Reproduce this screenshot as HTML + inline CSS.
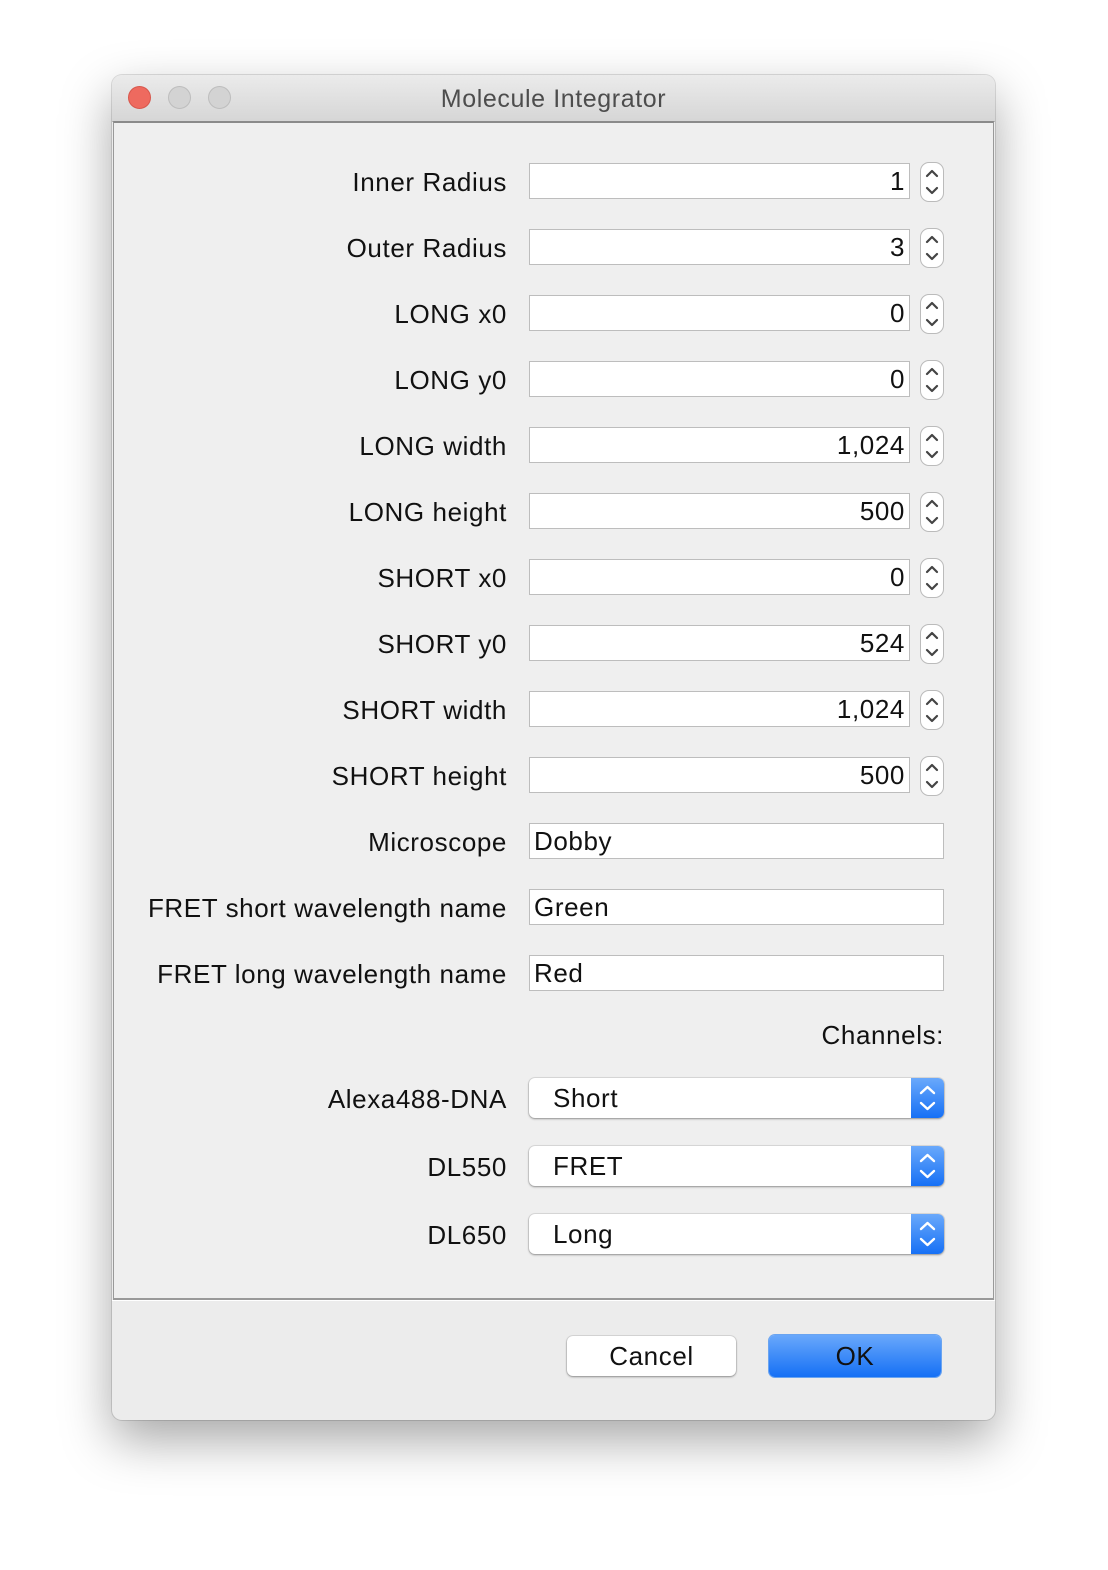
<!DOCTYPE html>
<html><head><style>
body{margin:0;width:1108px;height:1570px;background:#fff;font-family:"Liberation Sans","DejaVu Sans",sans-serif;position:relative;overflow:hidden;letter-spacing:0.6px}
.win{position:absolute;left:112px;top:75px;width:883px;height:1345px;background:#ececec;border-radius:10px;box-shadow:0 20px 50px rgba(0,0,0,0.35),0 0 0 1px rgba(0,0,0,0.12);overflow:hidden}
.title{position:absolute;left:0;top:0;width:100%;height:46px;background:linear-gradient(#ebebeb,#d6d6d6);border-bottom:1px solid #b4b4b4;text-align:center;line-height:48px;font-size:25px;color:#4d4d4d}
.dot{position:absolute;top:11px;width:23px;height:23px;border-radius:50%;box-sizing:border-box}
.panel{position:absolute;left:1px;top:46px;width:879px;height:1175px;background:#efefef;border:1px solid #999;border-top:2px solid #8a8a8a;border-bottom:2px solid #999}
.a{position:absolute;font-size:26px;color:#111;white-space:nowrap}
.lab{right:601px;text-align:right}
.tf{position:absolute;left:529px;height:36px;background:#fff;border:1px solid #bdbdbd;box-sizing:border-box;font-size:26px;line-height:34px;padding:0 4px;color:#111}
.num{width:381px;text-align:right}
.wide{width:415px}
.sp{position:absolute;left:920px;width:24px;height:40px;border:1px solid #bbb;border-radius:9px;background:#fff;box-sizing:border-box}
.sp svg{position:absolute;left:0;top:-1px}
.cb{position:absolute;left:529px;width:415px;height:40px;background:#fff;border-radius:6px;box-shadow:0 1px 2px rgba(0,0,0,0.35),0 0 0 1px rgba(0,0,0,0.08);font-size:26px;line-height:40px;color:#111;overflow:hidden}
.cb span{position:absolute;left:24px;top:0}
.cb i{position:absolute;right:0;top:0;width:33px;height:40px;background:linear-gradient(#6aa9fb,#1670f5)}
.cb i svg{display:block}
</style></head><body>
<div class="win">
<div class="title">Molecule Integrator
<div class="dot" style="left:16px;background:#ee6a5f;border:1px solid #d7574c"></div>
<div class="dot" style="left:56px;background:#d3d3d3;border:1px solid #bdbdbd"></div>
<div class="dot" style="left:96px;background:#d3d3d3;border:1px solid #bdbdbd"></div>
</div>
<div class="panel"></div>
<div style="position:absolute;left:0;top:1225px;width:100%;height:1px;background:#fff"></div>
</div>

<div class="a lab" style="top:167px">Inner Radius</div><div class="tf num" style="top:163px">1</div>
<div class="a lab" style="top:233px">Outer Radius</div><div class="tf num" style="top:229px">3</div>
<div class="a lab" style="top:299px">LONG x0</div><div class="tf num" style="top:295px">0</div>
<div class="a lab" style="top:365px">LONG y0</div><div class="tf num" style="top:361px">0</div>
<div class="a lab" style="top:431px">LONG width</div><div class="tf num" style="top:427px">1,024</div>
<div class="a lab" style="top:497px">LONG height</div><div class="tf num" style="top:493px">500</div>
<div class="a lab" style="top:563px">SHORT x0</div><div class="tf num" style="top:559px">0</div>
<div class="a lab" style="top:629px">SHORT y0</div><div class="tf num" style="top:625px">524</div>
<div class="a lab" style="top:695px">SHORT width</div><div class="tf num" style="top:691px">1,024</div>
<div class="a lab" style="top:761px">SHORT height</div><div class="tf num" style="top:757px">500</div>
<div class="a lab" style="top:827px">Microscope</div><div class="tf wide" style="top:823px">Dobby</div>
<div class="a lab" style="top:893px">FRET short wavelength name</div><div class="tf wide" style="top:889px">Green</div>
<div class="a lab" style="top:959px">FRET long wavelength name</div><div class="tf wide" style="top:955px">Red</div>
<div class="a" style="top:1020px;right:164px">Channels:</div>

<svg width="0" height="0" style="position:absolute"><defs><g id="ar"><path d="M7 14 L12 9 L17 14 M7 26 L12 31 L17 26" fill="none" stroke="#444" stroke-width="2.2" stroke-linecap="round" stroke-linejoin="round"/></g></defs></svg>
<div class="sp" style="top:162px"><svg width="24" height="40"><use href="#ar" x="-1"/></svg></div>
<div class="sp" style="top:228px"><svg width="24" height="40"><use href="#ar" x="-1"/></svg></div>
<div class="sp" style="top:294px"><svg width="24" height="40"><use href="#ar" x="-1"/></svg></div>
<div class="sp" style="top:360px"><svg width="24" height="40"><use href="#ar" x="-1"/></svg></div>
<div class="sp" style="top:426px"><svg width="24" height="40"><use href="#ar" x="-1"/></svg></div>
<div class="sp" style="top:492px"><svg width="24" height="40"><use href="#ar" x="-1"/></svg></div>
<div class="sp" style="top:558px"><svg width="24" height="40"><use href="#ar" x="-1"/></svg></div>
<div class="sp" style="top:624px"><svg width="24" height="40"><use href="#ar" x="-1"/></svg></div>
<div class="sp" style="top:690px"><svg width="24" height="40"><use href="#ar" x="-1"/></svg></div>
<div class="sp" style="top:756px"><svg width="24" height="40"><use href="#ar" x="-1"/></svg></div>

<div class="a lab" style="top:1084px">Alexa488-DNA</div>
<div class="cb" style="top:1078px"><span>Short</span><i><svg width="33" height="40"><path d="M10 15 L16.5 9 L23 15 M10 25 L16.5 31 L23 25" fill="none" stroke="#fff" stroke-width="2.4" stroke-linecap="round" stroke-linejoin="round"/></svg></i></div>
<div class="a lab" style="top:1152px">DL550</div>
<div class="cb" style="top:1146px"><span>FRET</span><i><svg width="33" height="40"><path d="M10 15 L16.5 9 L23 15 M10 25 L16.5 31 L23 25" fill="none" stroke="#fff" stroke-width="2.4" stroke-linecap="round" stroke-linejoin="round"/></svg></i></div>
<div class="a lab" style="top:1220px">DL650</div>
<div class="cb" style="top:1214px"><span>Long</span><i><svg width="33" height="40"><path d="M10 15 L16.5 9 L23 15 M10 25 L16.5 31 L23 25" fill="none" stroke="#fff" stroke-width="2.4" stroke-linecap="round" stroke-linejoin="round"/></svg></i></div>

<div style="position:absolute;left:567px;top:1336px;width:169px;height:40px;background:#fff;border-radius:6px;box-shadow:0 1px 2px rgba(0,0,0,0.35),0 0 0 1px rgba(0,0,0,0.08);text-align:center;line-height:40px;font-size:26px;color:#111">Cancel</div>
<div style="position:absolute;left:769px;top:1335px;width:172px;height:42px;border-radius:6px;background:linear-gradient(#69a8fb,#1570f5);box-shadow:0 0 0 1px #6aa4f0;text-align:center;line-height:42px;font-size:26px;color:#111">OK</div>
</body></html>
